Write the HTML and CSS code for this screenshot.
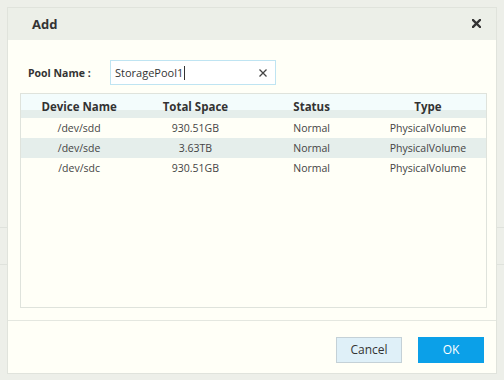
FILE: index.html
```html
<!DOCTYPE html>
<html lang="en">
<head>
    <meta charset="UTF-8">
    <title>Add</title>
    <link rel="stylesheet" href="styles.css">
</head>
<body>
    <div class="backdrop">
        <div class="dialog">
            <div class="dialog-header">
                <span class="dialog-title">Add</span>
                <svg class="dialog-close" width="9" height="9" viewBox="0 0 9 9">
                    <path d="M1 1 L8 8 M8 1 L1 8" stroke="#333" stroke-width="2.4" stroke-linecap="square"/>
                </svg>
            </div>

            <div class="dialog-body">
                <div class="form-row">
                    <label class="form-label">Pool Name :</label>
                    <div class="text-input">
                        <span class="input-value">StoragePool1<span class="caret"></span></span>
                        <svg class="input-clear" width="8" height="8" viewBox="0 0 8 8">
                            <path d="M0.5 0.5 L7.5 7.5 M7.5 0.5 L0.5 7.5" stroke="#444" stroke-width="1.3"/>
                        </svg>
                    </div>
                </div>

                <div class="grid">
                    <div class="grid-head">
                        <div class="cell">Device Name</div>
                        <div class="cell">Total Space</div>
                        <div class="cell">Status</div>
                        <div class="cell">Type</div>
                    </div>
                    <div class="grid-row">
                        <div class="cell">/dev/sdd</div>
                        <div class="cell">930.51GB</div>
                        <div class="cell">Normal</div>
                        <div class="cell">PhysicalVolume</div>
                    </div>
                    <div class="grid-row selected">
                        <div class="cell">/dev/sde</div>
                        <div class="cell">3.63TB</div>
                        <div class="cell">Normal</div>
                        <div class="cell">PhysicalVolume</div>
                    </div>
                    <div class="grid-row">
                        <div class="cell">/dev/sdc</div>
                        <div class="cell">930.51GB</div>
                        <div class="cell">Normal</div>
                        <div class="cell">PhysicalVolume</div>
                    </div>
                </div>
            </div>

            <div class="dialog-footer">
                <button class="btn btn-cancel">Cancel</button>
                <button class="btn btn-ok">OK</button>
            </div>
        </div>
    </div>
</body>
</html>
```

FILE: styles.css
```css
* {
    margin: 0;
    padding: 0;
    box-sizing: border-box;
}

body {
    font-family: "Open Sans", "Noto Sans", sans-serif;
    background-color: #edefe9;
    width: 504px;
    height: 380px;
    overflow: hidden;
}

.backdrop {
    position: relative;
    height: 380px;
    padding: 7px 7px 6px 7px;
    background:
        linear-gradient(#dfe2dc, #dfe2dc) 0 227px / 100% 1px no-repeat,
        linear-gradient(#dfe2dc, #dfe2dc) 0 264px / 100% 1px no-repeat,
        #edefe9;
}

.dialog {
    height: 367px;
    display: flex;
    flex-direction: column;
    background-color: #fffff7;
    border: 1px solid #e0e3dc;
}

.dialog-header {
    height: 32px;
    display: flex;
    align-items: center;
    justify-content: space-between;
    padding: 0 15px 0 24px;
    background-color: #ecefe8;
}

.dialog-title {
    font-size: 13px;
    font-weight: bold;
    color: #333;
}

.dialog-close {
    display: block;
    margin-top: -2px;
}

.dialog-body {
    flex: 1;
    padding: 20px 9px 12px 12px;
    display: flex;
    flex-direction: column;
    border-bottom: 1px solid #e4e7e0;
}

.form-row {
    display: flex;
    align-items: center;
    height: 25px;
}

.form-label {
    width: 90px;
    padding-left: 8px;
    font-size: 10.5px;
    font-weight: bold;
    color: #333;
}

.text-input {
    width: 166px;
    height: 25px;
    display: flex;
    align-items: center;
    justify-content: space-between;
    padding: 0 8px 0 4px;
    background-color: #fff;
    border: 1px solid #bfe4f2;
    font-size: 11px;
    color: #333;
}

.caret {
    display: inline-block;
    width: 1px;
    height: 14px;
    margin-left: 1px;
    vertical-align: -3px;
    background-color: #333;
}

.input-clear {
    display: block;
}

.grid {
    flex: 1;
    margin-top: 8px;
    background-color: #fffff7;
    border: 1px solid #dfe3dc;
}

.grid-head,
.grid-row {
    display: grid;
    grid-template-columns: repeat(4, 1fr);
}

.grid-head {
    height: 24px;
    background: linear-gradient(#f3fcfc 0, #f3fcfc 16px, #e5eeeb 16px);
    font-size: 11.5px;
    font-weight: bold;
    color: #333;
}

.grid-head .cell {
    padding-top: 5px;
    line-height: 16px;
}

.grid-row {
    height: 20px;
    font-size: 10.5px;
    color: #444;
}

.grid-row .cell {
    line-height: 20px;
}

.grid-row.selected {
    background-color: #e5eeeb;
}

.cell {
    text-align: center;
}

.dialog-footer {
    height: 52px;
    display: flex;
    align-items: center;
    justify-content: flex-end;
    gap: 16px;
    padding: 5px 12px 0 0;
}

.btn {
    width: 66px;
    height: 26px;
    font-family: "Open Sans", "Noto Sans", sans-serif;
    font-size: 12px;
    cursor: pointer;
}

.btn-cancel {
    background-color: #dff0f8;
    border: 1px solid #c4d1d7;
    color: #333;
}

.btn-ok {
    background-color: #0ba0e8;
    border: 1px solid #0ba0e8;
    color: #fff;
}
```
